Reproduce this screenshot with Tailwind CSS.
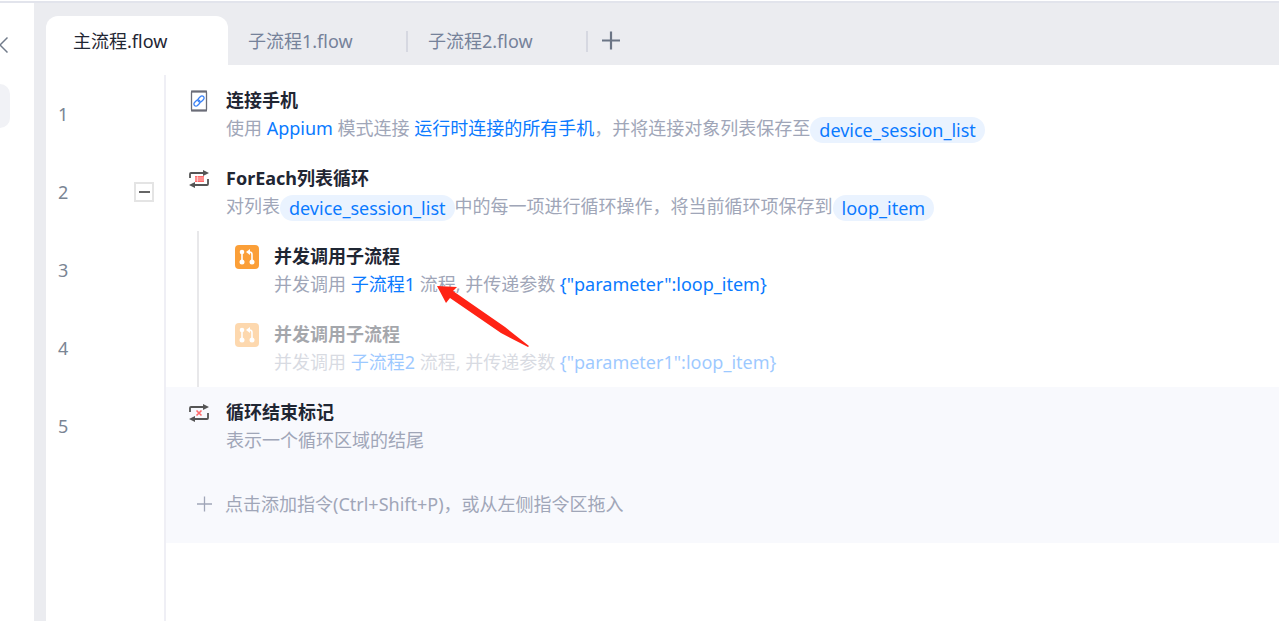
<!DOCTYPE html>
<html lang="zh-CN">
<head>
  <meta charset="UTF-8" />
  <meta name="viewport" content="width=device-width, initial-scale=1.0" />
  <title>主流程.flow</title>
  <script src="https://cdn.jsdelivr.net/npm/@tailwindcss/browser@4"></script>
</head>
<body class="flex h-screen flex-col overflow-hidden border-t border-white bg-[#ebecf0] font-['Noto_Sans','Noto_Sans_CJK_SC',sans-serif] text-[18px] text-[#1f2633]">

  <!-- Shared icons -->
  <svg class="hidden">
    <symbol id="icon-call" viewBox="0 0 24 24">
      <rect width="24" height="24" rx="4" fill="#fb9f38" />
      <g fill="none" stroke="#fff" stroke-width="1.600">
        <path d="M7 7v10M17 17V9.500q0-2.500-2.500-2.500H13" />
      </g>
      <g fill="#fff">
        <circle cx="7" cy="7" r="2.300" /><circle cx="7" cy="17" r="2.500" /><circle cx="17" cy="17" r="2.500" />
        <path d="M11 7l4-3v6z" />
      </g>
    </symbol>
    <symbol id="icon-loop" viewBox="0 0 22 20">
      <g fill="none" stroke="#555" stroke-width="1.800">
        <path d="M2 9V5q0-1 1-1h13M20 10v5q0 1-1 1H6" />
      </g>
      <path d="M15 1l6 3-6 3zM7 13l-6 3 6 3z" fill="#555" />
    </symbol>
  </svg>

  <div class="flex min-h-0 flex-1 border-t-2 border-[#e2e4ec]">

    <!-- Collapsed side panel -->
    <aside class="w-[34px] shrink-0 bg-white pt-8">
      <button aria-label="收起" class="block text-[#717b8a]">
        <svg class="h-5 w-2" viewBox="0 0 8 20" fill="none" stroke="currentColor" stroke-width="1.500"><path d="M7.500 2.500L0 10l7.500 7.500" /></svg>
      </button>
      <div class="mt-[29px] h-11 w-[10px] rounded-r-xl bg-[#f1f2f6]"></div>
    </aside>

    <main class="ml-3 flex min-w-0 flex-1 flex-col">
      <!-- Tabs -->
      <nav class="flex h-[62px] shrink-0 items-stretch pt-[13px] text-[#76829a]">
        <button class="w-[182px] rounded-t-xl bg-white pt-[2px] pl-[27px] text-left text-[#1f2633]">主流程.flow</button>
        <div class="flex w-[180px] items-center justify-between pt-[2px] pl-5">
          <button>子流程1.flow</button>
          <span class="h-[21px] w-[2px] bg-[#d6d8e1]"></span>
        </div>
        <div class="flex w-[180px] items-center justify-between pt-[2px] pl-5">
          <button>子流程2.flow</button>
          <span class="h-[21px] w-[2px] bg-[#d6d8e1]"></span>
        </div>
        <button aria-label="新建" class="ml-[11px] text-[#6b7585]">
          <svg class="h-6 w-6" viewBox="0 0 24 24" stroke="currentColor" stroke-width="2.200"><path d="M12 2.500v18M3 11.500h18" /></svg>
        </button>
      </nav>

      <div class="flex min-h-0 flex-1 bg-white pt-[10px]">
        <!-- Line numbers -->
        <ol class="w-[120px] shrink-0 border-r-2 border-[#efeff5] text-[#7a8594]">
          <li class="flex h-[78px] items-center pl-3">1</li>
          <li class="flex h-[78px] items-center justify-between pr-[10px] pl-3">
            2
            <button aria-label="折叠" class="flex h-5 w-5 items-center justify-center border-2 border-[#e4e4e4]">
              <span class="h-[2px] w-[11px] bg-[#666]"></span>
            </button>
          </li>
          <li class="flex h-[78px] items-center pl-3">3</li>
          <li class="flex h-[78px] items-center pl-3">4</li>
          <li class="flex h-[78px] items-center pl-3">5</li>
        </ol>

        <!-- Steps -->
        <div class="min-w-0 flex-1 whitespace-nowrap">
          <section class="flex h-[78px] gap-4 pt-3 pl-[22px]">
            <svg class="mt-[3px] h-[22px] w-[22px] shrink-0" viewBox="0 0 22 22" fill="none">
              <rect x="3.500" y="1.500" width="15" height="19" rx="1" fill="#fff" stroke="#6b6d78" stroke-width="1.300" />
              <path d="M3 1.500h16M3 20.500h16" stroke="#6b6d78" stroke-width="2" />
              <g stroke="#3b82f6" stroke-width="1.300">
                <rect x="-3.500" y="-2.100" width="7" height="4.200" rx="2.100" transform="translate(13 9) rotate(-45)" />
                <rect x="-3.500" y="-2.100" width="7" height="4.200" rx="2.100" transform="translate(9 13) rotate(-45)" />
              </g>
            </svg>
            <div>
              <h2 class="h-[26px] font-bold leading-[26px]">连接手机</h2>
              <p class="h-[30px] leading-[30px] text-[#a0a6b8]">使用 <a href="#" class="text-[#0a7aff]">Appium</a> 模式连接 <a href="#" class="text-[#0a7aff]">运行时连接的所有手机</a>，并将连接对象列表保存至<span class="inline-block h-[26px] rounded-full bg-[#eaf3ff] px-[9px] align-middle leading-[26px] text-[#0a7aff]">device_session_list</span></p>
            </div>
          </section>

          <section class="flex h-[78px] gap-4 pt-3 pl-[22px]">
            <svg class="mt-1 h-5 w-[22px] shrink-0" viewBox="0 0 22 20">
              <use href="#icon-loop" />
              <path d="M7 7h9v6H7z" fill="#ff6b6b" />
              <path d="M7 9h9M7 11h9M9.500 7v6" stroke="#fff" stroke-width=".5" />
            </svg>
            <div>
              <h2 class="h-[26px] font-bold leading-[26px]">ForEach列表循环</h2>
              <p class="h-[30px] leading-[30px] text-[#a0a6b8]">对列表<span class="inline-block h-[26px] rounded-full bg-[#eaf3ff] px-[9px] align-middle leading-[26px] text-[#0a7aff]">device_session_list</span>中的每一项进行循环操作，将当前循环项保存到<span class="inline-block h-[26px] rounded-full bg-[#eaf3ff] px-[9px] align-middle leading-[26px] text-[#0a7aff]">loop_item</span></p>
            </div>
          </section>

          <!-- Loop body -->
          <div class="ml-[31px] border-l-2 border-[#e8e8ea]">
            <section class="flex h-[78px] gap-[15px] pt-3 pl-9">
              <svg class="mt-[2px] h-6 w-6 shrink-0"><use href="#icon-call" /></svg>
              <div class="relative">
                <h2 class="h-[26px] font-bold leading-[26px]">并发调用子流程</h2>
                <p class="h-[30px] leading-[30px] text-[#a0a6b8]">并发调用 <a href="#" class="text-[#0a7aff]">子流程1</a> 流程, 并传递参数 <a href="#" class="text-[#0a7aff]">{"parameter":loop_item}</a></p>
                <!-- Pointer arrow -->
                <svg class="absolute top-[42px] left-[163px] h-[64px] w-[94px]" viewBox="0 0 94 64" fill="#ff2315">
                  <path d="M0 1l20 1-4 4 52 36 24 19-1 1-27-14L13 13l-4 5z" />
                </svg>
              </div>
            </section>
            <section class="flex h-[78px] gap-[15px] pt-3 pl-9 opacity-40">
              <svg class="mt-[2px] h-6 w-6 shrink-0"><use href="#icon-call" /></svg>
              <div>
                <h2 class="h-[26px] font-bold leading-[26px]">并发调用子流程</h2>
                <p class="h-[30px] leading-[30px] text-[#a0a6b8]">并发调用 <a href="#" class="text-[#0a7aff]">子流程2</a> 流程, 并传递参数 <a href="#" class="text-[#0a7aff]">{"parameter1":loop_item}</a></p>
              </div>
            </section>
          </div>

          <div class="bg-[#f8f9fd]">
            <section class="flex h-[78px] gap-4 pt-3 pl-[22px]">
              <svg class="mt-1 h-5 w-[22px] shrink-0" viewBox="0 0 22 20">
                <use href="#icon-loop" />
                <path d="M8.500 7.500l5 5M13.500 7.500l-5 5" stroke="#ff6b6b" stroke-width="1.600" />
              </svg>
              <div>
                <h2 class="h-[26px] font-bold leading-[26px]">循环结束标记</h2>
                <p class="h-[30px] leading-[30px] text-[#a0a6b8]">表示一个循环区域的结尾</p>
              </div>
            </section>
            <button class="flex h-[78px] w-full items-center gap-3 pl-[30px] text-[#a0a6b8]">
              <svg class="h-[17px] w-[17px]" viewBox="0 0 17 17" stroke="currentColor" stroke-width="1.300"><path d="M8.500 0.500v15M1 8h15" /></svg>
              点击添加指令(Ctrl+Shift+P)，或从左侧指令区拖入
            </button>
          </div>
        </div>
      </div>
    </main>
  </div>
</body>
</html>
